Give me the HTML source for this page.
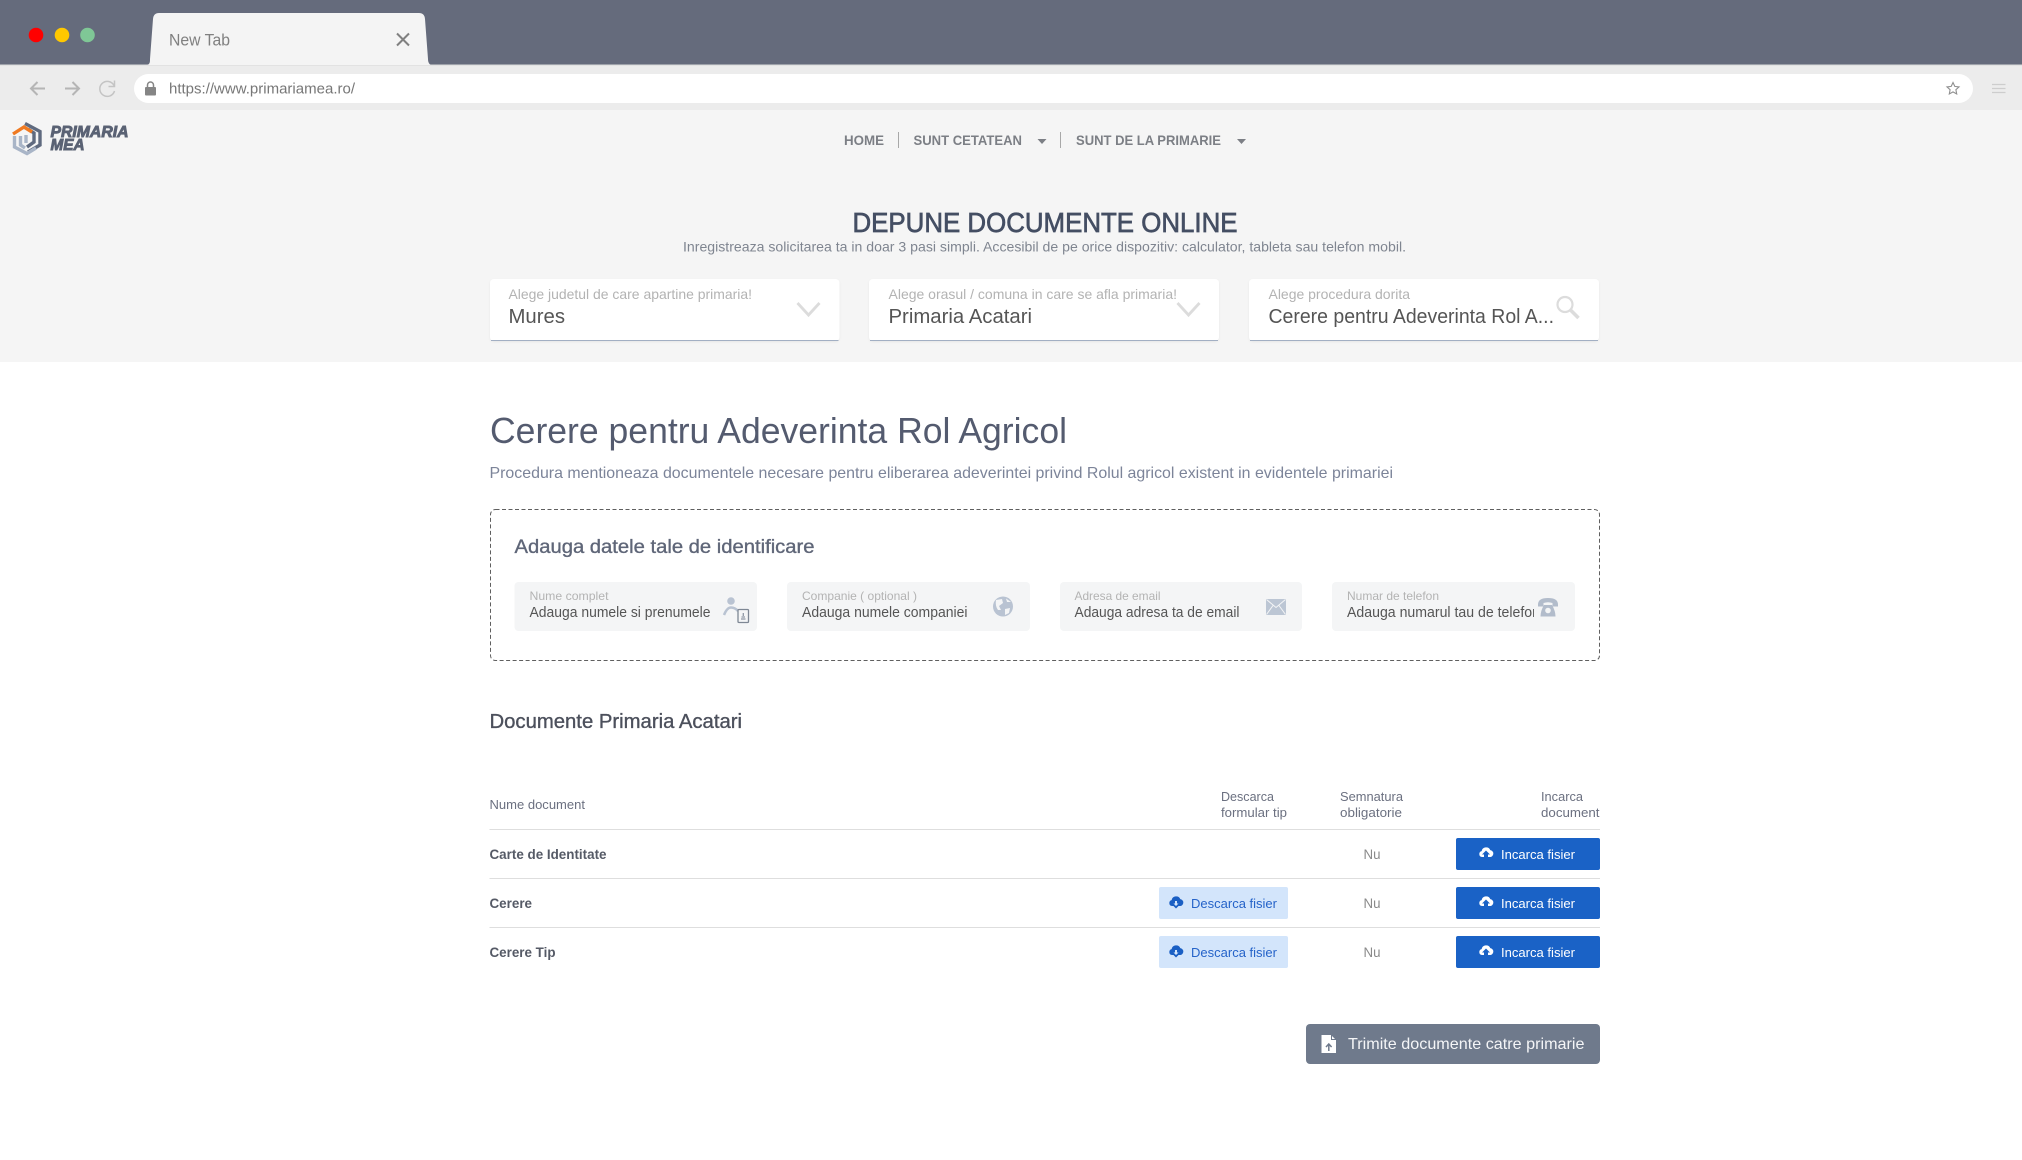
<!DOCTYPE html>
<html lang="ro"><head><meta charset="utf-8"><title>Primaria Mea</title>
<style>
html,body{margin:0;padding:0;background:#fff;width:2022px;height:1160px;overflow:hidden}
svg{display:block;font-family:"Liberation Sans",Arial,sans-serif}
</style></head><body>
<svg width="2022" height="1160" viewBox="0 0 2022 1160" xmlns="http://www.w3.org/2000/svg">
<defs>
<clipPath id="telclip"><rect x="1340" y="582" width="194" height="50"/></clipPath>
<filter id="sh" x="-5%" y="-10%" width="110%" height="125%"><feDropShadow dx="0" dy="1" stdDeviation="1" flood-color="#000" flood-opacity=".06"/></filter>
<g id="cloudup"><path d="M3 10.5a3 3 0 0 1-.4-5.9A4.6 4.6 0 0 1 11.3 3.6 3.5 3.5 0 0 1 11.5 10.5H9V8h2L7 4 3 8h2v2.5z" fill="#fff"/></g>
<g id="clouddown"><path d="M3 9.5a3 3 0 0 1-.4-5.9A4.6 4.6 0 0 1 11.3 2.6 3.5 3.5 0 0 1 11.5 9.5L9.5 9.500 7 12 4.500 9.500z" fill="#1a5fc4"/><path d="M6 4.500h2V7h1.500L7 9.500 4.500 7H6z" fill="#d3e5fb"/></g>
</defs>

<rect width="2022" height="1160" fill="#fff"/>
<!-- browser chrome -->
<rect width="2022" height="65" fill="#656b7c"/>
<rect y="65" width="2022" height="45" fill="#ececec"/>
<rect y="64.500" width="2022" height="1" fill="#d8d8d8"/>
<circle cx="36" cy="35" r="7.300" fill="#ff0000"/>
<circle cx="62" cy="35" r="7.300" fill="#ffc800"/>
<circle cx="87.500" cy="35" r="7.300" fill="#7fc796"/>
<path d="M147 65 C150 64 150 62 150 59 L153 19 Q153.500 13 159 13 L419 13 Q424.500 13 425 19 L428 59 C428 62 429 64 431 65 Z" fill="#f4f4f4"/>
<text x="169" y="45.500" font-size="16.500" fill="#808080" textLength="61" lengthAdjust="spacingAndGlyphs">New Tab</text>
<path d="M397 33.500 L409 45.500 M409 33.500 L397 45.500" stroke="#808080" stroke-width="2" fill="none"/>
<!-- toolbar -->
<path d="M45 88.500H31M37.500 82 L31 88.500 L37.500 95" stroke="#b5b5b5" stroke-width="2" fill="none"/>
<path d="M65 88.500H79M72.500 82 L79 88.500 L72.500 95" stroke="#b5b5b5" stroke-width="2" fill="none"/>
<path d="M114 85.500 A7.500 7.500 0 1 0 114.500 91" stroke="#c4c4c4" stroke-width="1.500" fill="none"/>
<path d="M114.500 80.500V86.500H108.500" stroke="#c4c4c4" stroke-width="1.500" fill="none"/>
<rect x="134" y="74" width="1839" height="29" rx="14.500" fill="#fff"/>
<rect x="145" y="87" width="11" height="8.500" rx="1" fill="#858585"/>
<path d="M147.500 87V85a3 3 0 0 1 6 0V87" stroke="#858585" stroke-width="1.500" fill="none"/>
<text x="169" y="93.500" font-size="15" fill="#777" textLength="186" lengthAdjust="spacingAndGlyphs">https://www.primariamea.ro/</text>
<path d="M1953 82.500 L1954.800 86.400 L1959 86.900 L1955.900 89.700 L1956.700 94 L1953 91.900 L1949.300 94 L1950.100 89.700 L1947 86.900 L1951.200 86.400 Z" stroke="#8f8f8f" stroke-width="1.100" fill="none"/>
<path d="M1992 84.500H2005.500M1992 88.500H2005.500M1992 92.500H2005.500" stroke="#cdcdcd" stroke-width="1.200"/>

<!-- header band -->
<rect y="110" width="2022" height="252" fill="#f5f5f5"/>
<!-- logo -->
<g fill="none" stroke-width="3.400" stroke-linejoin="miter">
<path d="M25 123.500 L40 131.500 V145 L28 152" stroke="#5f6a7f"/>
<path d="M28 129 L34 133 V142 L27 147" stroke="#5f6a7f"/>
<path d="M14.500 136 V147 L27 153.500 L36 148" stroke="#a9b5c7"/>
<path d="M20.500 136 V145 L25 148" stroke="#a9b5c7"/>
<path d="M26 135 V143" stroke="#a9b5c7"/>
<path d="M13 134 L24 127 L32 132" stroke="#f07a21"/>
</g>
<g font-weight="700" font-style="italic" fill="#5a6274" stroke="#5a6274" stroke-width=".9">
<text x="50.500" y="137" font-size="15.500" textLength="78" lengthAdjust="spacingAndGlyphs">PRIMARIA</text>
<text x="50.500" y="150" font-size="15.500" textLength="34" lengthAdjust="spacingAndGlyphs">MEA</text>
</g>
<!-- nav -->
<g font-size="14" font-weight="700" fill="#7c7f85">
<text x="844" y="145" textLength="40" lengthAdjust="spacingAndGlyphs">HOME</text>
<text x="913.500" y="145" textLength="108.500" lengthAdjust="spacingAndGlyphs">SUNT CETATEAN</text>
<text x="1076" y="145" textLength="145" lengthAdjust="spacingAndGlyphs">SUNT DE LA PRIMARIE</text>
</g>
<path d="M1037.500 139 H1046.500 L1042 144 Z M1237 139 H1246 L1241.500 144 Z" fill="#7c7f85"/>
<path d="M898.500 132V148M1060.500 132V148" stroke="#a8a8a8" stroke-width="1"/>
<!-- hero -->
<text x="852.500" y="232" font-size="27.500" fill="#444e63" stroke="#444e63" stroke-width=".7" textLength="385" lengthAdjust="spacingAndGlyphs">DEPUNE DOCUMENTE ONLINE</text>
<text x="683" y="251.500" font-size="14" fill="#7f8590" textLength="723" lengthAdjust="spacingAndGlyphs">Inregistreaza solicitarea ta in doar 3 pasi simpli. Accesibil de pe orice dispozitiv: calculator, tableta sau telefon mobil.</text>
<!-- select boxes -->
<g fill="#fff" filter="url(#sh)">
<rect x="490" y="279" width="349.500" height="62" rx="4"/>
<rect x="869" y="279" width="350" height="62" rx="4"/>
<rect x="1249" y="279" width="350" height="62" rx="4"/>
</g>
<path d="M491 340.500H838.500M870 340.500H1218M1250 340.500H1598" stroke="#a2afc3" stroke-width="1"/>
<g font-size="14" fill="#b3b3b3">
<text x="508.500" y="299" textLength="243.500" lengthAdjust="spacingAndGlyphs">Alege judetul de care apartine primaria!</text>
<text x="888.500" y="299" textLength="288.500" lengthAdjust="spacingAndGlyphs">Alege orasul / comuna in care se afla primaria!</text>
<text x="1268.500" y="299" textLength="141.500" lengthAdjust="spacingAndGlyphs">Alege procedura dorita</text>
</g>
<g font-size="20" fill="#555">
<text x="508.500" y="323" textLength="56.500" lengthAdjust="spacingAndGlyphs">Mures</text>
<text x="888.500" y="323" textLength="143.500" lengthAdjust="spacingAndGlyphs">Primaria Acatari</text>
<text x="1268.500" y="323" textLength="285.500" lengthAdjust="spacingAndGlyphs">Cerere pentru Adeverinta Rol A...</text>
</g>
<path d="M797.500 303 L808.500 315 L819.500 303M1177.500 303 L1188.500 315 L1199.500 303" stroke="#dcdcdc" stroke-width="2.800" fill="none"/>
<circle cx="1565" cy="304.500" r="7.500" stroke="#dcdcdc" stroke-width="2.200" fill="none"/>
<path d="M1570.500 310 L1578.500 318" stroke="#dcdcdc" stroke-width="3.500"/>

<!-- page heading -->
<text x="490" y="443" font-size="36" fill="#545b6f" textLength="577" lengthAdjust="spacingAndGlyphs">Cerere pentru Adeverinta Rol Agricol</text>
<text x="489.500" y="478" font-size="16" fill="#7c8499" textLength="903.500" lengthAdjust="spacingAndGlyphs">Procedura mentioneaza documentele necesare pentru eliberarea adeverintei privind Rolul agricol existent in evidentele primariei</text>

<!-- identification box -->
<rect x="490.500" y="509.500" width="1109" height="151" rx="5" fill="none" stroke="#5f5f5f" stroke-width="1" stroke-dasharray="4 2.500"/>
<text x="514.500" y="553" font-size="19" fill="#5f6678" stroke="#5f6678" stroke-width=".35" textLength="300" lengthAdjust="spacingAndGlyphs">Adauga datele tale de identificare</text>
<g fill="#f4f5f6">
<rect x="514.500" y="582" width="242.500" height="49" rx="4"/>
<rect x="787" y="582" width="243" height="49" rx="4"/>
<rect x="1060" y="582" width="242" height="49" rx="4"/>
<rect x="1332" y="582" width="243" height="49" rx="4"/>
</g>
<g font-size="12" fill="#b3b3b3">
<text x="529.500" y="600" textLength="79" lengthAdjust="spacingAndGlyphs">Nume complet</text>
<text x="802" y="600" textLength="115" lengthAdjust="spacingAndGlyphs">Companie ( optional )</text>
<text x="1074.500" y="600" textLength="86" lengthAdjust="spacingAndGlyphs">Adresa de email</text>
<text x="1347" y="600" textLength="92" lengthAdjust="spacingAndGlyphs">Numar de telefon</text>
</g>
<g font-size="14.500" fill="#555">
<text x="529.500" y="617" textLength="181" lengthAdjust="spacingAndGlyphs">Adauga numele si prenumele</text>
<text x="802" y="617" textLength="165.500" lengthAdjust="spacingAndGlyphs">Adauga numele companiei</text>
<text x="1074.500" y="617" textLength="165" lengthAdjust="spacingAndGlyphs">Adauga adresa ta de email</text>
<text x="1347" y="617" textLength="193" lengthAdjust="spacingAndGlyphs" clip-path="url(#telclip)">Adauga numarul tau de telefon</text>
</g>
<!-- person icon -->
<circle cx="731" cy="601" r="3.800" fill="#b9c3d2"/>
<path d="M724 615 Q727 607.500 731 607.500 Q735 607.500 738 611" stroke="#b9c3d2" stroke-width="2.500" fill="none"/>
<rect x="738" y="609.500" width="10.500" height="13" rx="1" fill="#f4f5f6" stroke="#7e8794" stroke-width="1.300"/>
<path d="M741 619h4.500M741.500 617h3.500M743.300 613v3" stroke="#8f98a5" stroke-width="1.300"/>
<!-- globe icon -->
<circle cx="1003" cy="606.500" r="10" fill="#b9c3d2"/>
<path d="M996 600 L1002 599 L1003 603 L999 606 L1001 610 L998 610 Q995 606 996 600Z M1005 609 L1010 608 L1009 613 L1005 615Z M1006 598.500 L1011 602 L1007 602Z" fill="#f4f5f6"/>
<!-- mail icon -->
<rect x="1266" y="599" width="20" height="16" fill="#bcc6d4"/>
<path d="M1266.500 599.500 L1276 607.500 L1285.500 599.500M1266.500 614.500 L1273 605.500M1285.500 614.500 L1279 605.500" stroke="#f4f5f6" stroke-width="1" fill="none"/>
<!-- phone icon -->
<path d="M1538 604.500 Q1538 598 1548 598 Q1558 598 1558 604.500 V606.500 H1552.500 V603 Q1548 601.500 1543.500 603 V606.500 H1538 Z" fill="#b2bccb"/>
<path d="M1540.500 616.500 Q1540.500 611 1544 605 H1552 Q1555.500 611 1555.500 616.500 Z" fill="#b2bccb"/>
<circle cx="1548" cy="610.500" r="2.800" fill="#f4f5f6"/>

<!-- table -->
<text x="489.500" y="728" font-size="20" fill="#4c505c" stroke="#4c505c" stroke-width=".35" textLength="252.500" lengthAdjust="spacingAndGlyphs">Documente Primaria Acatari</text>
<g font-size="13" fill="#6b7080">
<text x="489.500" y="809" textLength="95.500" lengthAdjust="spacingAndGlyphs">Nume document</text>
<text x="1221" y="801" textLength="53" lengthAdjust="spacingAndGlyphs">Descarca</text>
<text x="1221" y="817" textLength="66" lengthAdjust="spacingAndGlyphs">formular tip</text>
<text x="1340" y="801" textLength="63" lengthAdjust="spacingAndGlyphs">Semnatura</text>
<text x="1340" y="817" textLength="62" lengthAdjust="spacingAndGlyphs">obligatorie</text>
<text x="1541" y="801" textLength="42" lengthAdjust="spacingAndGlyphs">Incarca</text>
<text x="1541" y="817" textLength="58.500" lengthAdjust="spacingAndGlyphs">document</text>
</g>
<path d="M489.500 829.500H1600M489.500 878.500H1600M489.500 927.500H1600" stroke="#dedede" stroke-width="1"/>
<g font-size="13.500" font-weight="700" fill="#555a66">
<text x="489.500" y="859" textLength="117" lengthAdjust="spacingAndGlyphs">Carte de Identitate</text>
<text x="489.500" y="908" textLength="42.500" lengthAdjust="spacingAndGlyphs">Cerere</text>
<text x="489.500" y="957" textLength="66" lengthAdjust="spacingAndGlyphs">Cerere Tip</text>
</g>
<g font-size="13.500" fill="#8a8a8a">
<text x="1363.500" y="859" textLength="17" lengthAdjust="spacingAndGlyphs">Nu</text>
<text x="1363.500" y="908" textLength="17" lengthAdjust="spacingAndGlyphs">Nu</text>
<text x="1363.500" y="957" textLength="17" lengthAdjust="spacingAndGlyphs">Nu</text>
</g>
<g fill="#1a62c6">
<rect x="1456" y="838" width="144" height="32" rx="2"/>
<rect x="1456" y="887" width="144" height="32" rx="2"/>
<rect x="1456" y="936" width="144" height="32" rx="2"/>
</g>
<g fill="#d3e5fb">
<rect x="1159" y="887" width="129" height="32" rx="2"/>
<rect x="1159" y="936" width="129" height="32" rx="2"/>
</g>
<g font-size="13" fill="#fff">
<text x="1501" y="859" textLength="74" lengthAdjust="spacingAndGlyphs">Incarca fisier</text>
<text x="1501" y="908" textLength="74" lengthAdjust="spacingAndGlyphs">Incarca fisier</text>
<text x="1501" y="957" textLength="74" lengthAdjust="spacingAndGlyphs">Incarca fisier</text>
</g>
<g font-size="13" fill="#2563c9">
<text x="1191" y="908" textLength="86" lengthAdjust="spacingAndGlyphs">Descarca fisier</text>
<text x="1191" y="957" textLength="86" lengthAdjust="spacingAndGlyphs">Descarca fisier</text>
</g>
<use href="#cloudup" x="1479" y="846.500"/>
<use href="#cloudup" x="1479" y="895.500"/>
<use href="#cloudup" x="1479" y="944.500"/>
<use href="#clouddown" x="1169" y="896.500"/>
<use href="#clouddown" x="1169" y="945.500"/>

<!-- submit -->
<rect x="1306" y="1024" width="294" height="40" rx="4" fill="#6f7a8c"/>
<path d="M1321.500 1035 H1331 L1336 1040 V1053 H1321.500 Z" fill="#fff"/>
<path d="M1331.500 1035 V1039.500 H1336" stroke="#6f7a8c" stroke-width="1" fill="none"/>
<path d="M1328.800 1051V1044.500M1326 1047 L1328.800 1044 L1331.600 1047" stroke="#6f7a8c" stroke-width="1.500" fill="none"/>
<text x="1348" y="1049" font-size="16" fill="#f4f5f7" textLength="236.500" lengthAdjust="spacingAndGlyphs">Trimite documente catre primarie</text>
</svg>
</body></html>
